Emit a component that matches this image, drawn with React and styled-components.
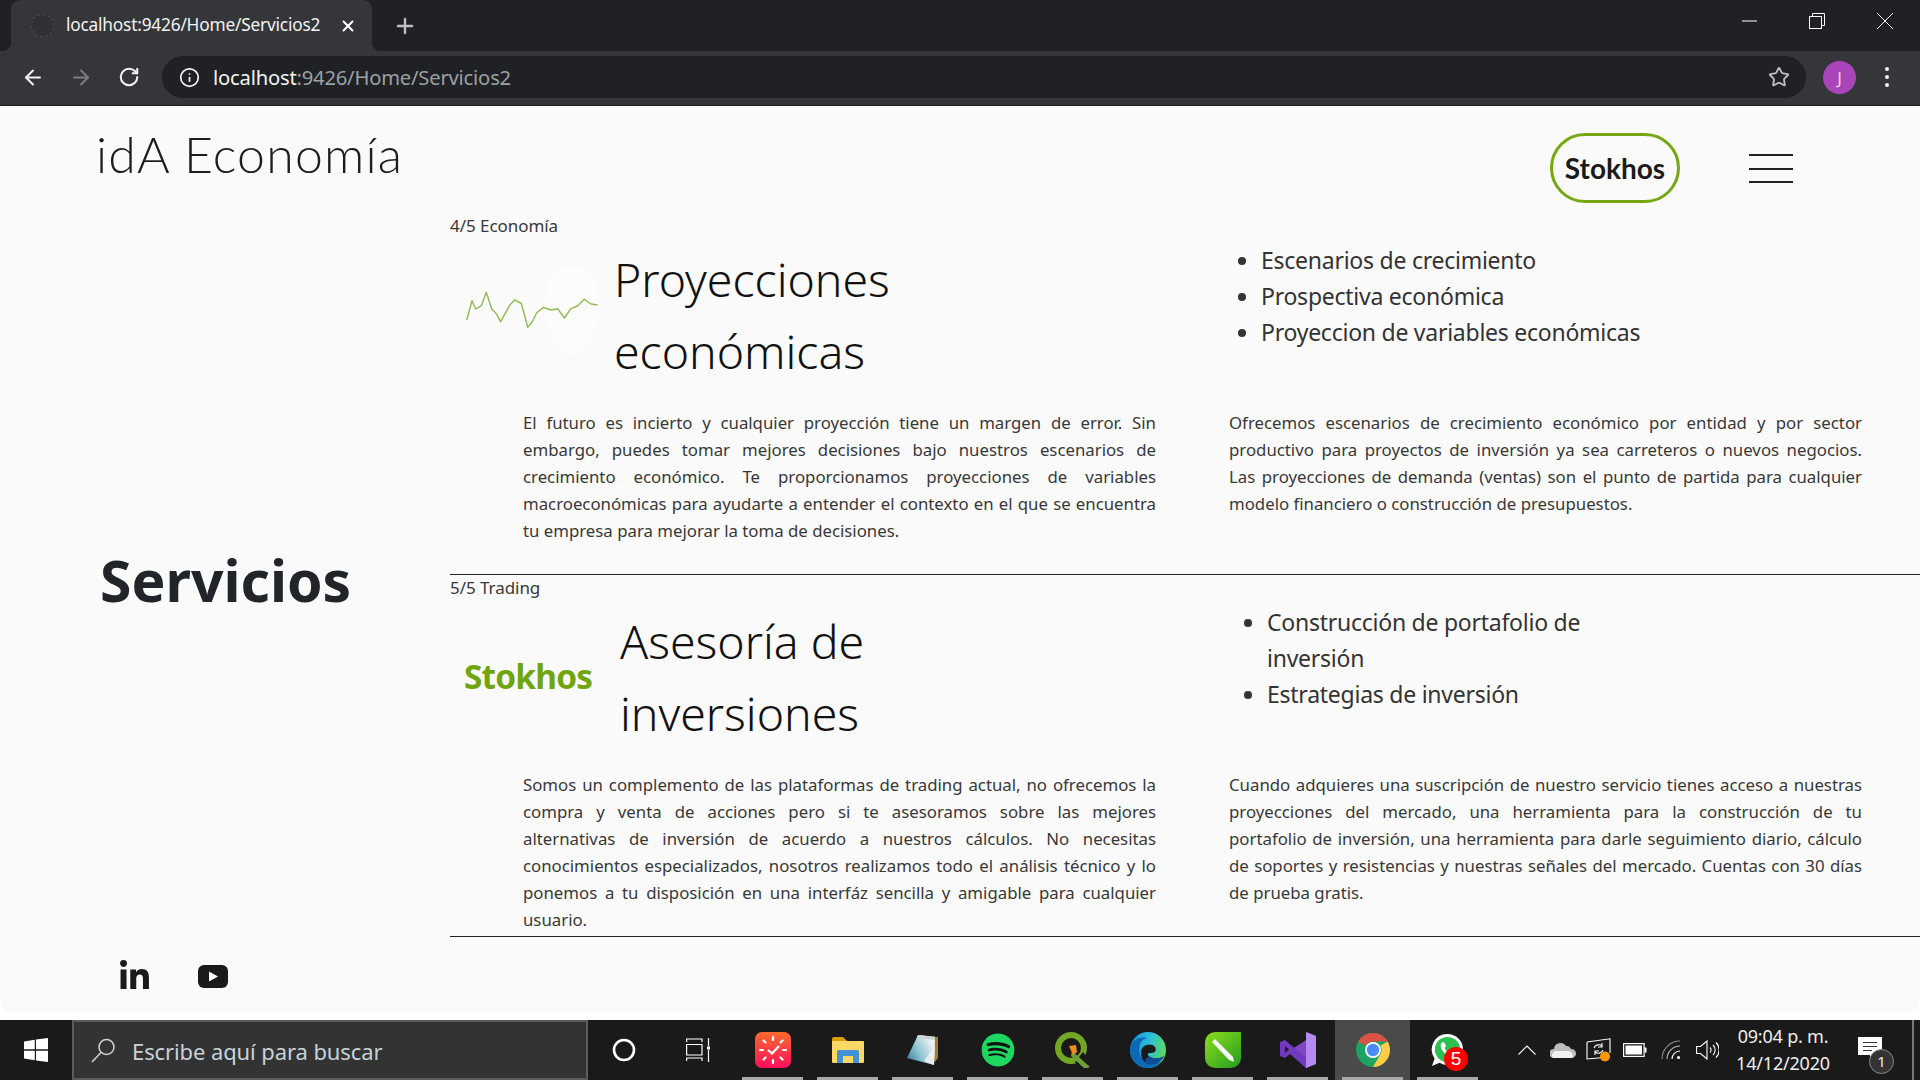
import React from "react";
import styled, { createGlobalStyle } from "styled-components";
import { FaLinkedinIn, FaSpotify } from "react-icons/fa";
import { ArrowLeft, ArrowRight, RotateCw, Info, Star, X, Plus } from "lucide-react";

const UI = '"Noto Sans", "Open Sans", sans-serif';
const GEO = '"Lato", "Liberation Sans", sans-serif';

const Global = createGlobalStyle`
  html, body { margin: 0; padding: 0; background: #fff; }
  #root { width: 1920px; height: 1080px; overflow: hidden; }
  * { box-sizing: border-box; }
`;

const Shell = styled.div`
  width: 1920px; height: 1080px; display: flex; flex-direction: column; background: #fff; font-family: ${UI}; color: #212529;
`;

/* browser chrome */
const TabStrip = styled.div`
  height: 51px; flex: none; background: #202124; display: flex; align-items: flex-end; padding-left: 11px;
`;
const Tab = styled.div`
  position: relative; width: 361px; height: 51px; background: #35363a; border-radius: 9px 9px 0 0; display: flex; align-items: center; color: #f1f3f4;
  &::before, &::after { content: ""; position: absolute; bottom: 0; width: 9px; height: 9px; }
  &::before { left: -9px; background: radial-gradient(circle at 0 0, #202124 9px, #35363a 9.5px); }
  &::after { right: -9px; background: radial-gradient(circle at 100% 0, #202124 9px, #35363a 9.5px); }
`;
const Favicon = styled.span`
  width: 23px; height: 23px; margin-left: 20px; border-radius: 50%; border: 1px dashed #4a4b50; flex: none; background: #303135;
`;
const TabTitle = styled.span`
  margin-left: 12px; width: 254px; font-size: 17.3px; white-space: nowrap; letter-spacing: -0.2px; position: relative; top: -1px;
`;
const TabClose = styled.span`
  margin-left: 19px; display: flex; color: #fff;
`;
const NewTab = styled.span`
  margin-left: 21px; align-self: center; display: flex; color: #bdc1c6;
`;
const WinButtons = styled.div`
  margin-left: auto; align-self: stretch; display: flex; color: #fff; padding-right: 16px; gap: 30px; padding-top: 8px;
`;
const WinButton = styled.span`
  width: 38px; height: 26px; display: flex; align-items: center; justify-content: center;
`;
const Toolbar = styled.div`
  height: 55px; flex: none; background: #35363a; border-bottom: 1px solid #1d1d1f; display: flex; align-items: center; color: #f1f3f4; padding-left: 21px; padding-bottom: 2px;
`;
const NavIcon = styled.span`
  width: 24px; display: flex; justify-content: center; margin-right: 24px; color: ${p => (p.$off ? "#7c7e82" : "#f1f3f4")};
`;
const Omnibox = styled.div`
  width: 1644px; height: 42px; margin-left: -3px; border-radius: 21px; background: #202124; display: flex; align-items: center; padding: 0 16px 0 17px;
`;
const Url = styled.div`
  margin-left: 13px; font-size: 20.2px; letter-spacing: -0.2px; color: #9aa0a6; white-space: nowrap;
  b { font-weight: 400; color: #f1f3f4; }
`;
const OmniStar = styled.span`
  margin-left: auto; display: flex; color: #bdc1c6;
`;
const Avatar = styled.span`
  width: 33px; height: 33px; border-radius: 50%; background: #a945b8; color: #f3d8f7; margin-left: 17px; display: flex; align-items: center; justify-content: center; font-size: 17px;
`;
const Dots = styled.span`
  margin-left: 29px; display: flex; flex-direction: column; gap: 4px;
  i { width: 4px; height: 4px; border-radius: 50%; background: #f1f3f4; display: block; }
`;

/* page */
const Viewport = styled.div`
  height: 914px; flex: none; background: #fff; padding-bottom: 8px;
`;
const Page = styled.div`
  height: 906px; background: #fafafa; border-radius: 0 0 12px 12px; display: flex; flex-direction: column;
`;
const Header = styled.header`
  height: 107px; flex: none; display: flex; padding-left: 96px; padding-right: 127px;
`;
const Brand = styled.div`
  font-family: ${GEO}; font-weight: 300; font-size: 50px; line-height: 1; margin-top: 23px; color: #1d1d1d; letter-spacing: 1.2px; height: 50px;
`;
const Pill = styled.div`
  margin-left: auto; margin-top: 27px; width: 130px; height: 70px; border: 3px solid #75a80f; border-radius: 35px; display: flex; align-items: center; justify-content: center;
  font-family: ${GEO}; font-weight: 700; font-size: 28px; color: #1a1a1a;
`;
const Burger = styled.div`
  margin-left: 69px; margin-top: 48px; width: 44px; height: 29px; display: flex; flex-direction: column; justify-content: space-between;
  i { display: block; height: 2px; background: #222; }
`;
const Body = styled.div`
  flex: 1; display: flex; min-height: 0;
`;
const Aside = styled.aside`
  width: 450px; flex: none; display: flex; flex-direction: column; padding-left: 100px;
`;
const PageTitle = styled.h1`
  margin: 327px 0 0; font-size: 57px; line-height: 80px; font-weight: 700; color: #212529;
`;
const Social = styled.div`
  margin-top: 340px; margin-left: 18px; display: flex; align-items: center; gap: 47px; color: #1a1a1a;
`;
const Main = styled.main`
  flex: 1; min-width: 0;
`;
const Section = styled.section`
  height: 362px; border-bottom: 1px solid #222;
`;
const Crumb = styled.div`
  font-size: 17px; line-height: 26px; color: #383838; height: 30px; letter-spacing: -0.05px;
`;
const Columns = styled.div`
  display: grid; grid-template-columns: 735px 735px;
`;
const Lead = styled.div`
  display: flex; align-items: center; height: 144px;
`;
const LogoSlot = styled.div`
  width: ${p => p.$w}px; flex: none; display: flex; align-items: center; padding-left: 15px;
`;
const WordLogo = styled.div`
  font-size: 33.4px; font-weight: 700; line-height: 1; color: #6fa60e; letter-spacing: -0.8px; margin-left: -1px;
`;
const Heading = styled.h2`
  margin: 0; font-weight: 300; font-size: 46.4px; line-height: 72px; color: #111; width: 300px;
`;
const Bullets = styled.ul`
  margin: -1px 0 0 ${p => p.$left}px; padding: 0 0 0 24px; width: ${p => p.$w}px; font-size: 23px; line-height: 36px; color: #333; font-weight: 400; letter-spacing: -0.25px;
`;
const Para = styled.p`
  margin: 22px 0 0 ${p => p.$left}px; width: 633px; font-size: 16.8px; line-height: 27px; color: #383838;
`;
const ParaLine = styled.span`
  display: block; white-space: nowrap; text-align: justify; text-align-last: ${p => (p.$last ? "left" : "justify")};
`;

/* taskbar */
const Taskbar = styled.footer`
  height: 60px; flex: none; background: #1a1a1a; display: flex; color: #fff;
`;
const StartSlot = styled.div`
  width: 72px; flex: none; display: flex; align-items: center; justify-content: center;
`;
const SearchBox = styled.div`
  width: 516px; flex: none; background: #333; border: 2px solid #5b5b5b; display: flex; align-items: center; padding-left: 17px; color: #d5d5d5;
`;
const SearchText = styled.span`
  margin-left: 16px; font-size: 22px; color: #c6d2da; letter-spacing: -0.1px; position: relative; top: 1px;
`;
const SystemIcon = styled.div`
  width: ${p => p.$w}px; flex: none; display: flex; align-items: center; justify-content: center;
`;
const TaskItem = styled.div`
  position: relative; width: 75px; flex: none; display: flex; align-items: center; justify-content: center;
  background: ${p => (p.$active ? "#4a4a4a" : "transparent")};
  &::after { content: ""; position: absolute; bottom: 0; left: 7px; right: 7px; height: 3px; background: ${p => (p.$open ? "#a8a8a8" : "transparent")}; }
`;
const RedBadge = styled.span`
  position: absolute; left: 34px; top: 27px; width: 24px; height: 24px; border-radius: 50%; background: #f00; color: #fff; font-size: 19px; line-height: 24px; text-align: center; font-family: "Liberation Sans", sans-serif;
`;
const Tray = styled.div`
  margin-left: auto; display: flex; align-items: center;
`;
const TrayIcon = styled.span`
  width: 36px; display: flex; align-items: center; justify-content: center;
`;
const Clock = styled.div`
  width: 112px; margin-left: 2px; text-align: center; font-size: 18px; line-height: 27px; color: #eee; letter-spacing: -0.2px;
`;
const Notify = styled.div`
  position: relative; width: 73px; display: flex; justify-content: center; align-self: stretch; align-items: center; padding-right: 11px;
`;
const NotifyBadge = styled.span`
  position: absolute; left: 30px; top: 29px; width: 25px; height: 25px; border-radius: 50%; background: #333; border: 1px solid #8a8a8a; font-size: 15px; line-height: 23px; text-align: center; color: #eee;
`;
const EdgeLine = styled.div`
  width: 2px; align-self: stretch; background: #777; margin-right: 6px;
`;

const spark = "1.7,55 7,35.7 10.7,44 16.3,40.7 21.3,27.3 26.7,44 31,48.3 35.7,56.7 45,39.7 49.7,35 56.3,38.3 62.7,62.3 67,57.3 71.7,47.7 78.7,42.3 85.7,45 92.7,43.7 99.3,53 106,43.7 112.3,41 119.3,34.3 126,39 132.7,40";

const Spark = () => (
  <svg width="135" height="100" viewBox="0 0 135 100">
    <ellipse cx="107" cy="42" rx="27" ry="47" fill="#fff" opacity="0.35" />
    <polyline points={spark} fill="none" stroke="#8fbc4f" strokeWidth="1.4" strokeLinejoin="round" />
  </svg>
);

const YouTube = () => (
  <svg width="30" height="23" viewBox="0 0 30 23">
    <rect width="30" height="23" rx="6" fill="#1a1a1a" />
    <path d="M11 6.5 L20 11.5 L11 16.5 Z" fill="#fafafa" />
  </svg>
);

const WinLogo = () => (
  <svg width="24" height="24" viewBox="0 0 24 24" fill="#fff">
    <path d="M0 3.4 L10.8 1.8 V11.3 H0 Z M12 1.6 L24 0 V11.3 H12 Z M0 12.7 H10.8 V22.2 L0 20.6 Z M12 12.7 H24 V24 L12 22.4 Z" />
  </svg>
);

const SearchGlyph = () => (
  <svg width="25" height="25" viewBox="0 0 25 25" fill="none" stroke="#d5d5d5" strokeWidth="1.5">
    <circle cx="15.5" cy="9" r="7.5" />
    <path d="M10 14.5 L1 24" />
  </svg>
);

const TaskView = () => (
  <svg width="24" height="24" viewBox="0 0 24 24" fill="none" stroke="#fff" strokeWidth="1.2">
    <path d="M.6 4 V1 H16 V4 M.6 6.5 H16 V17 H.6 Z M.6 23 V20 H16 V23 M22.5 0 V8 M22.5 12 V24" />
    <rect x="21" y="8.5" width="3" height="3" fill="#fff" stroke="none" />
  </svg>
);

const ClockApp = () => (
  <svg width="36" height="36" viewBox="0 0 36 36">
    <defs>
      <linearGradient id="clk" x1="0" y1="0" x2="0" y2="1">
        <stop offset="0" stopColor="#ff6a2b" />
        <stop offset="1" stopColor="#ff0f5c" />
      </linearGradient>
    </defs>
    <rect width="36" height="36" rx="7" fill="url(#clk)" />
    <g stroke="#fff" strokeWidth="2.2" strokeLinecap="round">
      <path d="M18 5 V8 M18 28 V31 M5 18 H8 M28 18 H31 M8.5 8.5 L10.5 10.5 M25.5 25.5 L27.5 27.5 M27.5 8.5 L25.5 10.5 M10.5 25.5 L8.5 27.5" />
    </g>
    <path d="M13 18 L17 21.5 L24 14" fill="none" stroke="#fff" strokeWidth="2.2" />
  </svg>
);

const FolderApp = () => (
  <svg width="32" height="28" viewBox="0 0 32 28">
    <path d="M0 3 a2 2 0 0 1 2-2 H11 L15 5 H0 Z" fill="#d9a100" />
    <path d="M0 5 H31 a1 1 0 0 1 1 1 V26 a1 1 0 0 1-1 1 H1 a1 1 0 0 1-1-1 Z" fill="#ffd766" />
    <path d="M5 27 V16 a2 2 0 0 1 2-2 H25 a2 2 0 0 1 2 2 V27 H21 V20 H11 V27 Z" fill="#3f94d8" />
  </svg>
);

const NotesApp = () => (
  <svg width="33" height="32" viewBox="0 0 33 32">
    <defs>
      <linearGradient id="pad" x1="0" y1="1" x2="1" y2="0.4">
        <stop offset="0" stopColor="#2f7488" />
        <stop offset="0.5" stopColor="#8fc4d2" />
        <stop offset="1" stopColor="#eef4f6" />
      </linearGradient>
    </defs>
    <path d="M14 1 L32 3 L32 24 L29 28 Z" fill="#a37c2d" />
    <path d="M12 1 L29 3 L28 31 L1 24 Z" fill="url(#pad)" />
    <path d="M12 1 L29 3 L28.8 6 L11 4 Z" fill="#c9d5d8" />
    <path d="M18 27 L28 31 L29 12 Z" fill="#e8eef0" />
  </svg>
);

const QgisApp = () => (
  <svg width="36" height="36" viewBox="0 0 36 36">
    <circle cx="16" cy="16" r="13" fill="none" stroke="#73a723" strokeWidth="6" />
    <path d="M20 30 L28 20 L36 30 L32 36 H26 Z" fill="#1a1a1a" />
    <path d="M17 19 L35 35 L30 37 L16 24 Z" fill="#6fa038" />
    <path d="M14 14 L21 13 L22 20 L18 23 Z" fill="#f58a1f" />
  </svg>
);

const EdgeApp = () => (
  <svg width="36" height="36" viewBox="0 0 36 36">
    <defs>
      <linearGradient id="edgeA" x1="0" y1="0" x2="1" y2="0.2">
        <stop offset="0" stopColor="#0c8ee0" />
        <stop offset="0.6" stopColor="#2dc1d6" />
        <stop offset="1" stopColor="#58d66a" />
      </linearGradient>
    </defs>
    <circle cx="18" cy="18" r="18" fill="url(#edgeA)" />
    <path d="M0 18 C0 8 10 4 17 6 C10 8 8 14 10 22 C12 30 24 34 32 29 C26 37 14 38 8 33 C3 29 0 24 0 18 Z" fill="#0d68b5" />
    <path d="M11 20 C11 13 21 10 25 15 C27 18 25 21 21 21 C17 21 17 23 20 25 C24 27 30 27 34 24 C30 32 20 34 15 30 C12 28 11 24 11 20 Z" fill="#1a1a1a" />
    <path d="M20 25 C24 27 30 27 34 24 C31 31 23 34 17 32 C14 30 16 24 20 25 Z" fill="#0e4f9b" />
  </svg>
);

const PencilApp = () => (
  <svg width="36" height="36" viewBox="0 0 36 36">
    <defs>
      <linearGradient id="pen" x1="0" y1="0" x2="1" y2="1">
        <stop offset="0" stopColor="#8fdc1c" />
        <stop offset="1" stopColor="#229c1f" />
      </linearGradient>
    </defs>
    <path d="M10 0 H36 V26 a10 10 0 0 1-10 10 H10 A10 10 0 0 1 0 26 V10 A10 10 0 0 1 10 0 Z" fill="url(#pen)" />
    <path d="M7 10 L10 7 L28 25 L29 30 L24 28 Z" fill="#f4f6f3" />
  </svg>
);

const VsApp = () => (
  <svg width="36" height="36" viewBox="0 0 36 36">
    <path d="M26 0 L36 4 V32 L26 36 L9 19 L26 8 Z" fill="#7c46c4" />
    <path d="M26 0 L36 4 V32 L26 36 Z" fill="#b58af0" />
    <path d="M0 10 L5 8 L26 26 V36 L10 22 L5 26 L0 24 Z" fill="#7139bc" />
    <path d="M5 14 V21 L9 17.5 Z" fill="#1a1a1a" />
  </svg>
);

const ChromeApp = () => (
  <svg width="34" height="34" viewBox="0 0 34 34">
    <circle cx="17" cy="17" r="17" fill="#1da462" />
    <path d="M17 0 A17 17 0 0 1 31.7 8.5 H17 A8.5 8.5 0 0 0 9.6 12.8 L2.3 8.5 A17 17 0 0 1 17 0 Z" fill="#dd5144" />
    <path d="M31.7 8.5 A17 17 0 0 1 17 34 L24.4 21.3 A8.5 8.5 0 0 0 24.4 12.8 Z" fill="#ffcd46" />
    <circle cx="17" cy="17" r="8" fill="#fff" />
    <circle cx="17" cy="17" r="6.2" fill="#4c8bf5" />
  </svg>
);

const WhatsAppApp = () => (
  <svg width="33" height="34" viewBox="0 0 33 34">
    <path d="M16.5 1 A15.5 15.5 0 0 1 16.5 32 A15.5 15.5 0 0 1 8.5 29.8 L1 33 L3.6 25.4 A15.5 15.5 0 0 1 16.5 1 Z" fill="#fff" />
    <circle cx="16.5" cy="16.5" r="12.6" fill="#2bc04f" />
    <path d="M11.5 9 C9.5 10.5 9 13 10.5 16 C12.5 20 15.5 22.8 19 23.8 C21.5 24.4 23.5 23 24 21 L20.8 19 L18.8 20.5 C16.5 19.5 14.5 17.3 13.6 15 L15 13 L13.2 9.4 Z" fill="#fff" />
  </svg>
);

const OneDrive = () => (
  <svg width="26" height="16" viewBox="0 0 26 16">
    <path d="M3 16 A4.5 4.5 0 0 1 4 7 A6.5 6.5 0 0 1 16 4 A5 5 0 0 1 21 7 A4.5 4.5 0 0 1 22 16 Z" fill="#bdbdbd" />
    <path d="M3 16 A4.5 4.5 0 0 1 8 9 H18 A4.5 4.5 0 0 1 22 16 Z" fill="#f1f1f1" />
  </svg>
);

const SyncIcon = () => (
  <svg width="26" height="24" viewBox="0 0 26 24" fill="none" stroke="#fff" strokeWidth="1.1">
    <path d="M1 4 L24 .8 V15 M18 19.5 L1 21 V4" />
    <path d="M8 10 a5 5 0 0 1 8-2 M17 12 a5 5 0 0 1-8 2" />
    <path d="M16 5 V9 H12 M9 17 V13 H13" />
    <circle cx="19" cy="18.5" r="5" fill="#ff9800" stroke="none" />
  </svg>
);

const Battery = () => (
  <svg width="24" height="14" viewBox="0 0 24 14">
    <rect x=".6" y=".6" width="20.5" height="12.8" fill="none" stroke="#fff" strokeWidth="1.2" />
    <rect x="2.5" y="2.5" width="16.5" height="9" fill="#fff" />
    <rect x="21.5" y="4.5" width="2" height="5" fill="#fff" />
  </svg>
);

const Wifi = () => (
  <svg width="20" height="20" viewBox="0 0 20 20" fill="none" stroke="#8a8a8a" strokeWidth="1.1">
    <path d="M1 19 A18 18 0 0 1 19 1" />
    <path d="M6 19 A13 13 0 0 1 19 6" stroke="#bbb" />
    <path d="M11 19 A8 8 0 0 1 19 11" stroke="#fff" />
    <circle cx="17.5" cy="17.5" r="1.6" fill="#fff" stroke="none" />
  </svg>
);

const Speaker = () => (
  <svg width="23" height="20" viewBox="0 0 23 20" fill="none" stroke="#fff" strokeWidth="1.1">
    <path d="M.6 6.5 H4.5 L11 1 V19 L4.5 13.5 H.6 Z" />
    <path d="M14 7.5 a3.5 3.5 0 0 1 0 5 M17 5 a7 7 0 0 1 0 10 M20 2.5 a10.5 10.5 0 0 1 0 15" />
  </svg>
);

const NoteBubble = () => (
  <svg width="24" height="26" viewBox="0 0 24 26">
    <path d="M0 0 H24 V18 H16 L12 25 V18 H0 Z" fill="#fff" />
    <path d="M5 5.5 H19 M5 9.5 H19 M5 13.5 H14" stroke="#333" strokeWidth="1.2" />
  </svg>
);

const Paragraph = ({ left, lines }) => (
  <Para $left={left}>
    {lines.map((line, i) => (
      <ParaLine key={line} $last={i === lines.length - 1}>{line}</ParaLine>
    ))}
  </Para>
);

const copy = {
  a: [
    "El futuro es incierto y cualquier proyección tiene un margen de error. Sin",
    "embargo, puedes tomar mejores decisiones bajo nuestros escenarios de",
    "crecimiento económico. Te proporcionamos proyecciones de variables",
    "macroeconómicas para ayudarte a entender el contexto en el que se encuentra",
    "tu empresa para mejorar la toma de decisiones.",
  ],
  b: [
    "Ofrecemos escenarios de crecimiento económico por entidad y por sector",
    "productivo para proyectos de inversión ya sea carreteros o nuevos negocios.",
    "Las proyecciones de demanda (ventas) son el punto de partida para cualquier",
    "modelo financiero o construcción de presupuestos.",
  ],
  c: [
    "Somos un complemento de las plataformas de trading actual, no ofrecemos la",
    "compra y venta de acciones pero si te asesoramos sobre las mejores",
    "alternativas de inversión de acuerdo a nuestros cálculos. No necesitas",
    "conocimientos especializados, nosotros realizamos todo el análisis técnico y lo",
    "ponemos a tu disposición en una interfáz sencilla y amigable para cualquier",
    "usuario.",
  ],
  d: [
    "Cuando adquieres una suscripción de nuestro servicio tienes acceso a nuestras",
    "proyecciones del mercado, una herramienta para la construcción de tu",
    "portafolio de inversión, una herramienta para darle seguimiento diario, cálculo",
    "de soportes y resistencias y nuestras señales del mercado. Cuentas con 30 días",
    "de prueba gratis.",
  ],
};

export default function App() {
  return (
    <Shell>
      <Global />
      <TabStrip>
        <Tab>
          <Favicon />
          <TabTitle>localhost:9426/Home/Servicios2</TabTitle>
          <TabClose><X size={18} strokeWidth={2.6} /></TabClose>
        </Tab>
        <NewTab><Plus size={24} strokeWidth={2.4} /></NewTab>
        <WinButtons>
          <WinButton>
            <svg width="15" height="2" viewBox="0 0 15 2"><path d="M0 1 H15" stroke="#fff" strokeWidth="1" /></svg>
          </WinButton>
          <WinButton>
            <svg width="16" height="16" viewBox="0 0 16 16" fill="none" stroke="#fff" strokeWidth="1"><path d="M3.5 3.5 V.5 H15.5 V12.5 H12.5" /><rect x=".5" y="3.5" width="12" height="12" /></svg>
          </WinButton>
          <WinButton>
            <svg width="16" height="16" viewBox="0 0 16 16" stroke="#fff" strokeWidth="1"><path d="M0 0 L16 16 M16 0 L0 16" /></svg>
          </WinButton>
        </WinButtons>
      </TabStrip>
      <Toolbar>
        <NavIcon><ArrowLeft size={25} strokeWidth={2} /></NavIcon>
        <NavIcon $off><ArrowRight size={25} strokeWidth={2} /></NavIcon>
        <NavIcon><RotateCw size={22} strokeWidth={2.2} /></NavIcon>
        <Omnibox>
          <Info size={21} strokeWidth={2} />
          <Url><b>localhost</b>:9426/Home/Servicios2</Url>
          <OmniStar><Star size={22} strokeWidth={2} /></OmniStar>
        </Omnibox>
        <Avatar>J</Avatar>
        <Dots><i /><i /><i /></Dots>
      </Toolbar>
      <Viewport>
        <Page>
          <Header>
            <Brand>idA Economía</Brand>
            <Pill>Stokhos</Pill>
            <Burger><i /><i /><i /></Burger>
          </Header>
          <Body>
            <Aside>
              <PageTitle>Servicios</PageTitle>
              <Social>
                <FaLinkedinIn size={33} />
                <YouTube />
              </Social>
            </Aside>
            <Main>
              <Section>
                <Crumb>4/5 Economía</Crumb>
                <Columns>
                  <Lead>
                    <LogoSlot $w={164}><Spark /></LogoSlot>
                    <Heading>Proyecciones económicas</Heading>
                  </Lead>
                  <Bullets $left={52} $w={480}>
                    <li>Escenarios de crecimiento</li>
                    <li>Prospectiva económica</li>
                    <li>Proyeccion de variables económicas</li>
                  </Bullets>
                </Columns>
                <Columns>
                  <Paragraph left={73} lines={copy.a} />
                  <Paragraph left={44} lines={copy.b} />
                </Columns>
              </Section>
              <Section>
                <Crumb>5/5 Trading</Crumb>
                <Columns>
                  <Lead>
                    <LogoSlot $w={170}><WordLogo>Stokhos</WordLogo></LogoSlot>
                    <Heading>Asesoría de inversiones</Heading>
                  </Lead>
                  <Bullets $left={58} $w={364}>
                    <li>Construcción de portafolio de inversión</li>
                    <li>Estrategias de inversión</li>
                  </Bullets>
                </Columns>
                <Columns>
                  <Paragraph left={73} lines={copy.c} />
                  <Paragraph left={44} lines={copy.d} />
                </Columns>
              </Section>
            </Main>
          </Body>
        </Page>
      </Viewport>
      <Taskbar>
        <StartSlot><WinLogo /></StartSlot>
        <SearchBox>
          <SearchGlyph />
          <SearchText>Escribe aquí para buscar</SearchText>
        </SearchBox>
        <SystemIcon $w={72}>
          <svg width="24" height="24" viewBox="0 0 24 24"><circle cx="12" cy="12" r="10" fill="none" stroke="#fff" strokeWidth="2.6" /></svg>
        </SystemIcon>
        <SystemIcon $w={75}><TaskView /></SystemIcon>
        <TaskItem $open><ClockApp /></TaskItem>
        <TaskItem $open><FolderApp /></TaskItem>
        <TaskItem $open><NotesApp /></TaskItem>
        <TaskItem $open><FaSpotify size={34} color="#1ed760" style={{ background: "#111", borderRadius: "50%" }} /></TaskItem>
        <TaskItem $open><QgisApp /></TaskItem>
        <TaskItem $open><EdgeApp /></TaskItem>
        <TaskItem $open><PencilApp /></TaskItem>
        <TaskItem $open><VsApp /></TaskItem>
        <TaskItem $open $active><ChromeApp /></TaskItem>
        <TaskItem $open>
          <WhatsAppApp />
          <RedBadge>5</RedBadge>
        </TaskItem>
        <Tray>
          <TrayIcon>
            <svg width="18" height="10" viewBox="0 0 18 10" fill="none" stroke="#fff" strokeWidth="1.1"><path d="M.5 9.5 L9 1 L17.5 9.5" /></svg>
          </TrayIcon>
          <TrayIcon><OneDrive /></TrayIcon>
          <TrayIcon><SyncIcon /></TrayIcon>
          <TrayIcon><Battery /></TrayIcon>
          <TrayIcon><Wifi /></TrayIcon>
          <TrayIcon><Speaker /></TrayIcon>
          <Clock>09:04 p. m.<br />14/12/2020</Clock>
          <Notify>
            <NoteBubble />
            <NotifyBadge>1</NotifyBadge>
          </Notify>
          <EdgeLine />
        </Tray>
      </Taskbar>
    </Shell>
  );
}
